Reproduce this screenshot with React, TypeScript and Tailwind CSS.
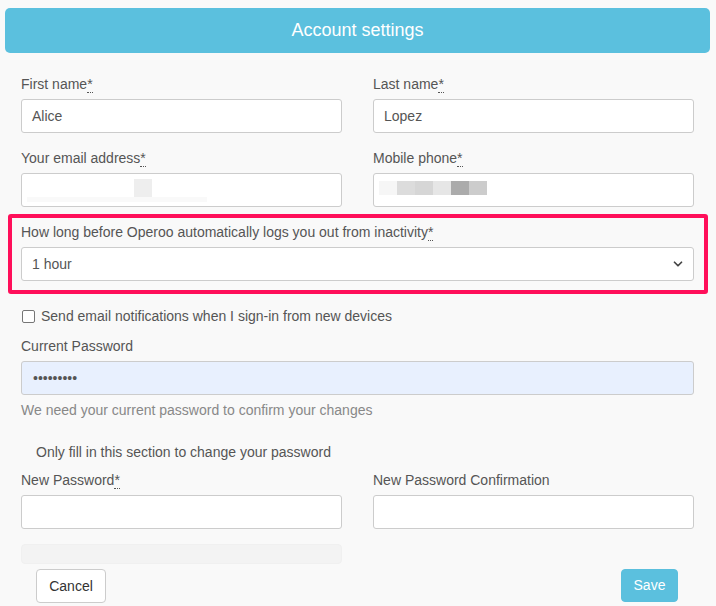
import { ChevronDown } from 'lucide-react'

function Req() {
  return <abbr className="no-underline border-b border-dotted border-[#555] leading-none">*</abbr>
}

function Label({ text, req }: { text: string; req?: boolean }) {
  return (
    <div className="h-5 leading-5 mb-[5px] text-[14px] text-[#555]">
      {text}
      {req && <Req />}
    </div>
  )
}

function Field({ children, className = '', filled }: { children?: React.ReactNode; className?: string; filled?: boolean }) {
  return (
    <div
      className={`h-[34px] border border-[#ccc] rounded-[3px] px-[10px] flex items-center text-[14px] text-[#555] ${
        filled ? 'bg-[#e8f0fe]' : 'bg-white'
      } ${className}`}
    >
      {children}
    </div>
  )
}

const phoneBlocks = ['#f6f6f6', '#dcdcdc', '#d6d6d6', '#e6e6e6', '#ababab', '#cccccc']

export default function App() {
  return (
    <div className="min-h-[606px] bg-[#f9f9f9] pt-2 font-['Liberation_Sans',Arial,sans-serif] overflow-hidden">
      <div className="mx-[5px] w-[705px] h-[45px] rounded-[5px] bg-[#5bc0de] flex items-center justify-center text-white text-[18px]">
        Account settings
      </div>

      <div className="px-[21px] w-[715px]">
        <div className="grid grid-cols-2 gap-x-[31px] mt-[21px]">
          <div>
            <Label text="First name" req />
            <Field>Alice</Field>
          </div>
          <div>
            <Label text="Last name" req />
            <Field>Lopez</Field>
          </div>
          <div className="mt-[15px]">
            <Label text="Your email address" req />
            <Field className="relative">
              <div className="absolute left-[112px] top-[5px] w-[18px] h-[18px] bg-[#eeeeee]" />
              <div className="absolute left-[5px] top-[23px] w-[180px] h-[5px] bg-[#f9f9f9]" />
            </Field>
          </div>
          <div className="mt-[15px]">
            <Label text="Mobile phone" req />
            <Field className="relative">
              <div className="absolute left-[5px] top-[7px] flex">
                {phoneBlocks.map((c, i) => (
                  <div key={i} className="w-[18px] h-[14px]" style={{ background: c }} />
                ))}
              </div>
            </Field>
          </div>
        </div>

        <div className="mt-[7px] -ml-[13px] w-[700px] border-4 border-[#ff0f5a] rounded-[3px] pl-[9px] pr-[10px] pt-[4px] pb-[9px]">
          <Label text="How long before Operoo automatically logs you out from inactivity" req />
          <Field className="justify-between">
            <span>1 hour</span>
            <ChevronDown className="w-[14px] h-[14px] text-[#444] -mr-[2px]" strokeWidth={3} />
          </Field>
        </div>

        <div className="mt-[12px] h-5 flex items-center text-[14px] text-[#555]">
          <span className="ml-px w-[13px] h-[13px] border border-[#767676] rounded-[2px] bg-white" />
          <span className="ml-[6px]">Send email notifications when I sign-in from new devices</span>
        </div>

        <div className="mt-[10px]">
          <Label text="Current Password" />
          <Field filled className="text-[#222] text-[9px] pl-[11px]">•••••••••</Field>
        </div>
        <div className="mt-[5px] h-5 leading-5 text-[14px] text-[#888]">
          We need your current password to confirm your changes
        </div>

        <div className="mt-[22px] ml-[15px] h-5 leading-5 text-[14px] text-[#555]">
          Only fill in this section to change your password
        </div>

        <div className="grid grid-cols-2 gap-x-[31px] mt-[8px]">
          <div>
            <Label text="New Password" req />
            <Field />
            <div className="mt-[15px] h-[20px] rounded-[4px] bg-[#f3f3f3] border border-[#f0f0f0]" />
          </div>
          <div>
            <Label text="New Password Confirmation" />
            <Field />
          </div>
        </div>

        <div className="mt-[5px] flex justify-between">
          <button className="ml-[15px] w-[70px] h-[34px] border border-[#ccc] rounded-[4px] bg-white text-[14px] text-[#333]">
            Cancel
          </button>
          <button className="mr-[16px] w-[57px] h-[33px] rounded-[4px] bg-[#5bc0de] border border-[#5bbfdd] text-[14px] text-white">
            Save
          </button>
        </div>
      </div>
    </div>
  )
}
